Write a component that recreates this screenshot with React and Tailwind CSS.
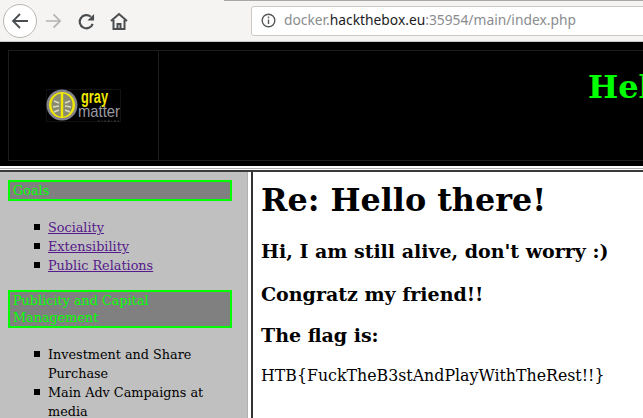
const links = ["Sociality", "Extensibility", "Public Relations"]

const Toolbar = () => (
  <div className="h-[42px] shrink-0 bg-[#f5f4f2] border-b border-[#c9c7c3] flex items-center relative">
    <div className="ml-[3px] w-[34px] h-[34px] shrink-0 rounded-full bg-white border border-[#b9b7b3] flex items-center justify-center">
      <svg width="18" height="18" viewBox="0 0 18 18" fill="none" stroke="#4a4d50" strokeWidth="1.8">
        <path d="M17 9H2M9 2L2 9l7 7" />
      </svg>
    </div>
    <svg className="ml-[8px] shrink-0" width="17" height="18" viewBox="0 0 18 18" fill="none" stroke="#b3b3b1" strokeWidth="1.8">
      <path d="M1 9h15M9 2l7 7-7 7" />
    </svg>
    <svg className="ml-[16px] shrink-0" width="17" height="18" viewBox="0 0 18 18" fill="none" stroke="#4a4d50" strokeWidth="2.3">
      <path d="M15.5 12a7 7 0 1 1-2-7.5" />
      <path d="M17 1.5v7h-7z" fill="#4a4d50" stroke="none" />
    </svg>
    <svg className="ml-[15px] shrink-0" width="18" height="18" viewBox="0 0 18 18" fill="none" stroke="#4a4d50" strokeWidth="2">
      <path d="M1 9l8-7 8 7M3.5 8v9h11V8M7.5 17v-5h3v5" />
    </svg>
    <div className="ml-[123px] w-[420px] h-[30px] shrink-0 bg-white border border-[#ccc9c4] rounded-[3px] flex items-center font-['Noto_Sans',sans-serif] text-[13.8px] text-[#8a8c8f] whitespace-nowrap">
      <svg className="ml-[9px] mr-[8px] shrink-0" width="15" height="15" viewBox="0 0 15 15" fill="none" stroke="#55585b" strokeWidth="1.4">
        <circle cx="7.5" cy="7.5" r="6.3" />
        <path d="M7.5 6.5v4.5M7.5 3.6v1.6" />
      </svg>
      <span>docker.</span>
      <span className="text-[#1b1c1e]">hackthebox.eu</span>
      <span>:35954/main/index.php</span>
    </div>
    <div className="absolute top-0 right-0 left-[224px] h-px bg-[#a9a7a4]" />
  </div>
)

const Logo = () => (
  <svg width="76" height="33" viewBox="0 0 76 33" className="block">
    <rect x="0.5" y="0.5" width="74" height="32" fill="#000" stroke="#222" strokeDasharray="1 1" />
    <circle cx="16" cy="16" r="15.5" fill="#83838e" />
    <circle cx="16" cy="16" r="13" fill="#f0e800" />
    <ellipse cx="16" cy="16" rx="10.5" ry="11.5" fill="#8a8a70" />
    <path d="M16 3v26" stroke="#f0e800" strokeWidth="2.4" />
    <path d="M8 12l5 2M7 18l6-1M8 23l5-2M24 12l-5 2M25 18l-6-1M24 23l-5-2" stroke="#dcdcc4" strokeWidth="1.4" />
    <text x="35" y="14" fontFamily="Liberation Sans, sans-serif" fontWeight="700" fontSize="18" fill="#f0e800" textLength="27" lengthAdjust="spacingAndGlyphs">gray</text>
    <text x="32" y="28" fontFamily="Liberation Sans, sans-serif" fontWeight="400" fontSize="17" fill="#9a9aa2" textLength="42" lengthAdjust="spacingAndGlyphs">matter</text>
    <text x="52" y="32.5" fontFamily="Liberation Sans, sans-serif" fontSize="3" fill="#666" textLength="21">studios</text>
  </svg>
)

const Header = () => (
  <div className="h-[124px] shrink-0 bg-black pt-2 pl-2 overflow-hidden relative">
    <div className="h-[111px] w-[700px] border border-[#1c1c1c] flex">
      <div className="w-[150px] h-full border-r border-[#1c1c1c] shrink-0 flex items-center justify-center">
        <Logo />
      </div>
      <div className="flex-1 pl-[429px] pt-[14px]">
        <h1 className="text-[32px] leading-[44px] font-bold text-[#00ff00] whitespace-nowrap">Hello there!</h1>
      </div>
    </div>
  </div>
)

const SideTitle = ({ children }) => (
  <div className="ml-2 mr-[15px] border-2 border-[#00ff00] bg-[#808080] text-[#00ff00] px-[3px] text-[12.8px] leading-[17px]">
    {children}
  </div>
)

const Bullet = ({ children }) => (
  <li className="relative leading-[19px]">
    <span className="absolute left-[-14px] top-[6px] w-[6px] h-[6px] bg-black" />
    {children}
  </li>
)

const Sidebar = () => (
  <div className="w-[247px] shrink-0 bg-[#c0c0c0] pt-[8px] overflow-hidden text-[12.8px] text-black">
    <SideTitle>Goals</SideTitle>
    <ul className="mt-[17px] pl-[48px] pr-[15px]">
      {links.map((link) => (
        <Bullet key={link}>
          <a href="#" className="text-[#551a8b] underline">{link}</a>
        </Bullet>
      ))}
    </ul>
    <div className="mt-[15px]">
      <SideTitle>Publicity and Capital Management</SideTitle>
    </div>
    <ul className="mt-[17px] pl-[48px] pr-[15px]">
      <Bullet>Investment and Share Purchase</Bullet>
      <Bullet>Main Adv Campaigns at media</Bullet>
    </ul>
  </div>
)

const Content = () => (
  <div className="flex-1 bg-white pl-[8px] text-black overflow-hidden">
    <h1 className="mt-[9px] text-[31.8px] leading-[38px] font-bold">Re: Hello there!</h1>
    <h2 className="mt-[20px] text-[19px] leading-[24px] font-bold">Hi, I am still alive, don't worry :)</h2>
    <h2 className="mt-[19px] text-[19px] leading-[24px] font-bold">Congratz my friend!!</h2>
    <h2 className="mt-[17px] text-[19px] leading-[24px] font-bold">The flag is:</h2>
    <p className="mt-[19px] text-[15.8px] leading-[19px] whitespace-nowrap">HTB{"{"}FuckTheB3stAndPlayWithTheRest!!{"}"}</p>
  </div>
)

export default function App() {
  return (
    <div className="w-[643px] h-[418px] overflow-hidden flex flex-col font-['DejaVu_Serif',serif]">
      <Toolbar />
      <Header />
      <div className="h-[4px] shrink-0 bg-white flex flex-col pt-[2px]">
        <div className="h-px bg-[#b0b0b0]" />
      </div>
      <div className="flex-1 min-h-0 flex border-t-2 border-[#3a3a3a]">
        <Sidebar />
        <div className="w-[6px] shrink-0 bg-white border-l border-r-2 border-l-[#b0b0b0] border-r-[#333]" />
        <Content />
      </div>
    </div>
  )
}
